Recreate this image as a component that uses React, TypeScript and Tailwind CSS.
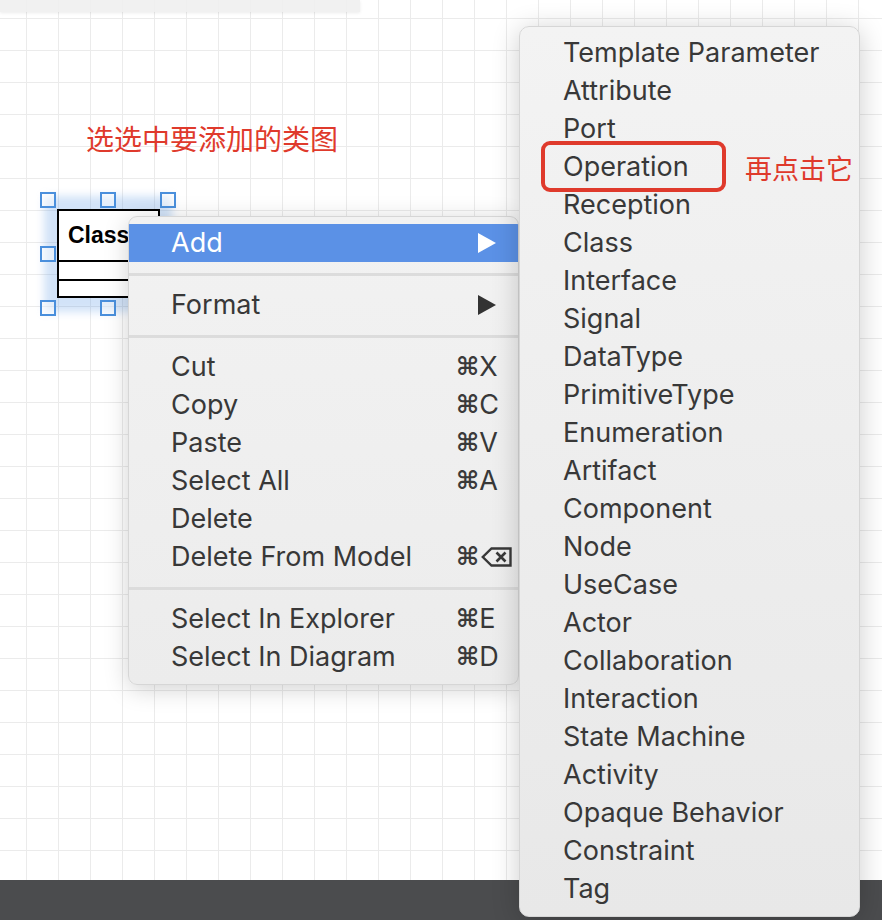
import React from "react";

const subItems = [
  "Template Parameter",
  "Attribute",
  "Port",
  "Operation",
  "Reception",
  "Class",
  "Interface",
  "Signal",
  "DataType",
  "PrimitiveType",
  "Enumeration",
  "Artifact",
  "Component",
  "Node",
  "UseCase",
  "Actor",
  "Collaboration",
  "Interaction",
  "State Machine",
  "Activity",
  "Opaque Behavior",
  "Constraint",
  "Tag",
];

function Arrow({ white }: { white?: boolean }) {
  return (
    <svg width="18" height="20" viewBox="0 0 18 20" className={white ? "fill-white" : "fill-[#333333]"}>
      <polygon points="0,0 18,10 0,20" />
    </svg>
  );
}

function EraseIcon() {
  return (
    <svg width="31" height="20" viewBox="0 0 31 20" fill="none" className="stroke-[#383838]">
      <path d="M10.5 1.5 H29.5 V18.5 H10.5 L1.8 10 Z" strokeWidth="2.4" strokeLinejoin="miter" />
      <path d="M15.5 5.5 L24.5 14.5 M24.5 5.5 L15.5 14.5" strokeWidth="2.6" />
    </svg>
  );
}

function Item({ label, shortcut, erase }: { label: string; shortcut?: string; erase?: boolean }) {
  return (
    <div className="h-[38px] flex items-center pl-[42px]">
      <span className="w-[285px]">{label}</span>
      {shortcut && (
        <span className="flex items-center">
          <span className="font-['DejaVu_Sans',sans-serif] text-[25px] font-bold text-[#3a3a3a]">⌘</span>
          {erase ? <span className="ml-[2px] flex items-center"><EraseIcon /></span> : <span>{shortcut}</span>}
        </span>
      )}
    </div>
  );
}

function Sep() {
  return (
    <div className="h-[24px] flex items-center">
      <div className="h-[3px] w-full bg-[#dcdcdc]" />
    </div>
  );
}

export default function App() {
  return (
    <div className="w-[882px] h-[920px] flex flex-col overflow-hidden font-['Inter','Helvetica_Neue','DejaVu_Sans',sans-serif]">
      <div className="relative flex-1 bg-white bg-[linear-gradient(to_right,#ebebeb_1px,transparent_1px),linear-gradient(to_bottom,#ebebeb_1px,transparent_1px)] bg-size-[32px_32px] bg-position-[26px_18px]">
        <div className="w-[360px] h-[12px] bg-[#efefef]/90 shadow-[0_1px_3px_rgba(0,0,0,0.08)]" />

        {/* annotation */}
        <div className="absolute left-[86px] top-[119px] text-[28px] leading-[38px] text-[#df3a2c] font-['Noto_Sans_CJK_SC',sans-serif]">
          选选中要添加的类图
        </div>

        {/* selection glow */}
        <div className="absolute left-[44px] top-[196px] w-[128px] h-[116px] bg-[#4a90e2]/25 blur-[4px]" />

        {/* class box */}
        <div className="absolute left-[57px] top-[209px] w-[103px] h-[89px] border-2 border-black bg-white flex flex-col">
          <div className="h-[49px] flex items-center pl-[9px] font-['Liberation_Sans',Arial,sans-serif] font-bold text-[23px] text-black">
            Class
          </div>
          <div className="h-[2px] bg-black" />
          <div className="h-[17px]" />
          <div className="h-[2px] bg-black" />
          <div className="flex-1" />
        </div>

        {/* handles */}
        <div className="absolute left-[40px] top-[192px] w-[16px] h-[16px] border-2 border-[#4a8fdc] bg-white/40" />
        <div className="absolute left-[100px] top-[192px] w-[16px] h-[16px] border-2 border-[#4a8fdc] bg-white/40" />
        <div className="absolute left-[160px] top-[192px] w-[16px] h-[16px] border-2 border-[#4a8fdc] bg-white/40" />
        <div className="absolute left-[40px] top-[246px] w-[16px] h-[16px] border-2 border-[#4a8fdc] bg-white/40" />
        <div className="absolute left-[40px] top-[300px] w-[16px] h-[16px] border-2 border-[#4a8fdc] bg-white/40" />
        <div className="absolute left-[100px] top-[300px] w-[16px] h-[16px] border-2 border-[#4a8fdc] bg-white/40" />

        {/* context menu */}
        <div className="absolute left-[128px] top-[216px] w-[391px] pt-[7px] pb-[8px] rounded-[9px] bg-[linear-gradient(to_bottom,#f2f2f2,#ececec)] border border-[#d6d6d6] shadow-[0_4px_24px_rgba(0,0,0,0.18)] text-[27px] text-[#383838] overflow-hidden">
          <div className="h-[38px] flex items-center justify-between pl-[42px] pr-[22px] bg-[#5b91e6] text-white">
            <span>Add</span>
            <Arrow white />
          </div>
          <Sep />
          <div className="h-[38px] flex items-center justify-between pl-[42px] pr-[22px]">
            <span>Format</span>
            <Arrow />
          </div>
          <Sep />
          <Item label="Cut" shortcut="X" />
          <Item label="Copy" shortcut="C" />
          <Item label="Paste" shortcut="V" />
          <Item label="Select All" shortcut="A" />
          <Item label="Delete" />
          <Item label="Delete From Model" shortcut="⌫" erase />
          <Sep />
          <Item label="Select In Explorer" shortcut="E" />
          <Item label="Select In Diagram" shortcut="D" />
        </div>

        {/* submenu */}
        <div className="absolute z-10 left-[519px] top-[26px] w-[341px] pt-[7px] pb-[8px] rounded-[10px] bg-[linear-gradient(to_bottom,#f3f3f3,#e8e8e8)] border border-[#d6d6d6] shadow-[0_4px_28px_rgba(0,0,0,0.2)] text-[27px] text-[#383838]">
          {subItems.map((s) => (
            <div key={s} className="h-[38px] flex items-center pl-[43px]">
              {s}
            </div>
          ))}
        </div>

        {/* highlight box */}
        <div className="absolute z-20 left-[541px] top-[141px] w-[185px] h-[51px] border-[4px] border-[#df3a2c] rounded-[9px]" />
        <div className="absolute z-20 left-[745px] top-[149px] text-[27px] leading-[38px] text-[#df3a2c] font-['Noto_Sans_CJK_SC',sans-serif]">
          再点击它
        </div>
      </div>
      <div className="h-[40px] bg-[#4b4c4e]" />
    </div>
  );
}
